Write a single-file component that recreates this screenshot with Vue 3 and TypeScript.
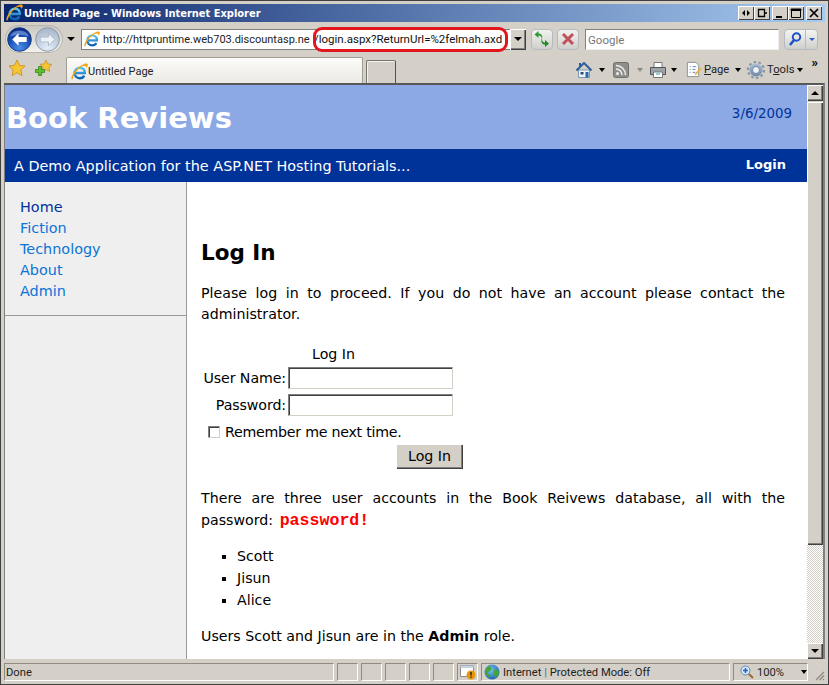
<script setup lang="ts">
const navItems: { label: string; active: boolean }[] = [
  { label: 'Home', active: true },
  { label: 'Fiction', active: false },
  { label: 'Technology', active: false },
  { label: 'About', active: false },
  { label: 'Admin', active: false },
]
const users: string[] = ['Scott', 'Jisun', 'Alice']
</script>

<template>
  <div class="win">
    <svg width="0" height="0" class="defs">
      <defs>
        <linearGradient id="eg" x1="0" y1="0" x2="0" y2="1">
          <stop offset="0" stop-color="#58c8f4" />
          <stop offset="1" stop-color="#0a62b8" />
        </linearGradient>
        <radialGradient id="backg" cx="0.5" cy="0.85" r="0.8">
          <stop offset="0" stop-color="#4a8ee8" />
          <stop offset="0.6" stop-color="#1a50b8" />
          <stop offset="1" stop-color="#0c2a80" />
        </radialGradient>
        <radialGradient id="fwdg" cx="0.5" cy="0.85" r="0.8">
          <stop offset="0" stop-color="#e4edf6" />
          <stop offset="1" stop-color="#a8b8cc" />
        </radialGradient>
        <radialGradient id="globeg" cx="0.4" cy="0.35" r="0.7">
          <stop offset="0" stop-color="#7cc4f0" />
          <stop offset="1" stop-color="#1a5fb0" />
        </radialGradient>
        <linearGradient id="gearg" x1="0" y1="0" x2="0" y2="1">
          <stop offset="0" stop-color="#a9bed4" />
          <stop offset="1" stop-color="#6f89a6" />
        </linearGradient>
        <symbol id="ie" viewBox="0 0 16 16">
          <path d="M3.600 9.400h9.400c.2-3-1.800-5-4.600-5-2.900 0-5 2.200-5 5.100 0 2.800 2 4.800 4.800 4.800 1.900 0 3.400-.8 4.200-2.400" fill="none" stroke="url(#eg)" stroke-width="2.300" />
          <path d="M.6 15.400C-.6 13 4 5 10.500 1.800c2.600-1.300 4.700-1.700 5.200-.6.400.9-.3 2.300-1.400 3.600.2-1.100-.2-2.100-1.200-2.300C9.500 2 3.300 8.500 1.900 14c-.2.800-.8 1.900-1.300 1.400z" fill="#f2a416" />
        </symbol>
      </defs>
    </svg>

    <div class="titlebar">
      <svg class="title-ie" width="17" height="17"><use href="#ie" /></svg>
      <span class="title-text">Untitled Page - Windows Internet Explorer</span>
      <div class="capbtns">
        <span class="capbtn"><svg width="12" height="10" viewBox="0 0 12 10"><path d="M5 2v6L2 5zM7 2v6l3-3z" fill="#000" /></svg></span>
        <span class="capbtn gap"><svg width="12" height="10" viewBox="0 0 12 10"><path d="M2.500 1.500h6v7h-6zM8 5h3" fill="none" stroke="#000" stroke-width="1.300" /></svg></span>
        <span class="capbtn"><svg width="12" height="10" viewBox="0 0 12 10"><path d="M2 8h6v2H2z" fill="#000" /></svg></span>
        <span class="capbtn"><svg width="12" height="10" viewBox="0 0 12 10"><path d="M1.500 1.500h9v8h-9zM1 1h10v1.500H1z" fill="none" stroke="#000" /></svg></span>
        <span class="capbtn close"><svg width="12" height="10" viewBox="0 0 12 10"><path d="M2 1l8 8M10 1l-8 8" stroke="#000" stroke-width="1.700" /></svg></span>
      </div>
    </div>

    <div class="addr-row">
      <div class="navpod">
        <svg width="25" height="25" viewBox="0 0 26 26" class="navbtn">
          <circle cx="13" cy="13" r="12.300" fill="url(#backg)" stroke="#173a88" />
          <path d="M3 10a10.500 9 0 0 1 20 0a18 10 0 0 0-20 0z" fill="#8fb8ee" opacity=".55" />
          <path d="M5.500 13l6.500-6.500v4h8.500v5H12v4z" fill="#fff" />
        </svg>
        <svg width="25" height="25" viewBox="0 0 26 26" class="navbtn">
          <circle cx="13" cy="13" r="12.300" fill="url(#fwdg)" stroke="#8a97a8" />
          <path d="M20.500 13L14 6.500v4H5.500v5H14v4z" fill="#eef2f6" stroke="#9fb0c4" stroke-width=".8" />
        </svg>
      </div>
      <span class="tri nav-tri"></span>
      <div class="addr-box">
        <span class="doc"><svg width="16" height="16"><use href="#ie" /></svg></span>
        <span class="url">http://httpruntime.web703.discountasp.ne</span>
        <span class="url-rest">/login.aspx?ReturnUrl=%2felmah.axd</span>
        <span class="redmark"></span>
        <span class="addr-drop"><span class="tri"></span></span>
      </div>
      <span class="tbtn first">
        <svg width="18" height="18" viewBox="0 0 18 18"><path d="M9 9C8.500 6.500 7 5.500 5.500 5.500V8L1.500 4.500 5.500 1v2.500C8.500 3.500 10 6 9 9z" fill="#2e9a34" /><path d="M9 8c-.5 2.700.8 4.500 3 4.800V10l4 3.500-4 3.500v-2.300C8.500 14.700 7.600 11 9 8z" fill="#1f8a2a" /></svg>
      </span>
      <span class="tbtn">
        <svg width="16" height="16" viewBox="0 0 16 16"><path d="M3 3l10 10M13 3L3 13" stroke="#c2505a" stroke-width="3" /></svg>
      </span>
      <div class="search-box">Google</div>
      <div class="search-btn">
        <span class="s-main">
          <svg width="16" height="16" viewBox="0 0 16 16"><circle cx="9.500" cy="6" r="3.700" fill="none" stroke="#1a50c8" stroke-width="2" /><path d="M7 9l-4 5" stroke="#1a50c8" stroke-width="2.500" /></svg>
        </span>
        <span class="s-drop"><span class="tri blue"></span></span>
      </div>
    </div>

    <div class="tab-row">
      <svg class="star" width="18" height="18" viewBox="0 0 18 18"><path d="M9 1l2.400 5.300 5.600.7-4.100 3.900 1.100 5.700L9 13.800 4 16.600l1.100-5.700L1 7l5.600-.7z" fill="#f6c535" stroke="#c88a18" stroke-width=".8" /></svg>
      <svg class="star2" width="18" height="18" viewBox="0 0 18 18"><path d="M11 1l1.700 3.900 4.300.5-3.100 2.900.8 4.200L11 10.500 7.300 12.500l.8-4.200L5 5.400l4.300-.5z" fill="#f6c535" stroke="#c88a18" stroke-width=".7" /><path d="M3.500 7.500h3v3h3v3h-3v3h-3v-3h-3v-3h3z" fill="#5cc02c" stroke="#2a7a18" stroke-width=".7" /></svg>
      <div class="tab">
        <svg width="17" height="17"><use href="#ie" /></svg>
        <span>Untitled Page</span>
      </div>
      <div class="newtab"></div>
      <div class="cmdbar">
        <svg width="16" height="16" viewBox="0 0 16 16"><path d="M2.500 8v7.500h11V8z" fill="#eef3f8" stroke="#7b98b8" /><path d="M.5 8.500L8 1l7.500 7.500" fill="none" stroke="#2c5f9e" stroke-width="2" /><path d="M3 1h2v3H3z" fill="#2c5f9e" /><path d="M9.500 10h3v5.500h-3z" fill="#2c66a8" /><path d="M4.500 10h3v2.500h-3z" fill="#2c4a78" /></svg>
        <span class="tri c1"></span>
        <svg class="rss" width="16" height="16" viewBox="0 0 16 16"><rect x=".5" y=".5" width="15" height="15" rx="2" fill="#8e8e8a" stroke="#6e6e6a" /><circle cx="4.500" cy="11.500" r="1.500" fill="#eee" /><path d="M3 7a6 6 0 0 1 6 6M3 3.500a9.500 9.500 0 0 1 9.500 9.500" fill="none" stroke="#eee" stroke-width="1.500" /></svg>
        <span class="tri c2 dim"></span>
        <svg class="print" width="18" height="18" viewBox="0 0 18 18"><path d="M5 1.500h8v5H5z" fill="#fff" stroke="#777" /><path d="M1.500 6.500h15v7h-15z" fill="#9ea4aa" stroke="#50555b" /><path d="M4.500 11h9v5.500h-9z" fill="#fff" stroke="#777" /><path d="M7 13h4" stroke="#2aa0a0" /></svg>
        <span class="tri c3"></span>
        <svg class="pg" width="17" height="17" viewBox="0 0 18 18"><path d="M2.500 1.500h9l3 3v12h-12z" fill="#fff" stroke="#8a8f96" /><path d="M5 6h1M8 6h4M5 9h1M8 9h3M5 12h1M8 12h3" stroke="#5a80b8" /><path d="M10 14l6-7 1.500 1.500-6 6.500z" fill="#e8b040" /></svg>
        <span class="cmd-label"><u>P</u>age</span>
        <span class="tri c4"></span>
        <svg class="gear" width="18" height="18" viewBox="0 0 18 18"><circle cx="9" cy="9" r="6.500" fill="url(#gearg)" /><circle cx="9" cy="9" r="8" fill="none" stroke="#7d92a8" stroke-width="2" stroke-dasharray="2.500 2.500" /><circle cx="9" cy="9" r="3.500" fill="#eef2f6" stroke="#6f89a6" /></svg>
        <span class="cmd-label">T<u>o</u>ols</span>
        <span class="tri c5"></span>
        <span class="more">»</span>
      </div>
    </div>

    <div class="viewport">
      <div class="page">
        <header class="hero">
          <h1>Book Reviews</h1>
          <span class="date">3/6/2009</span>
        </header>
        <div class="band">
          <span>A Demo Application for the ASP.NET Hosting Tutorials...</span>
          <a class="login">Login</a>
        </div>
        <div class="columns">
          <aside class="side">
            <ul class="nav">
              <li v-for="item in navItems" :key="item.label" :class="{ active: item.active }">{{ item.label }}</li>
            </ul>
          </aside>
          <main class="main">
            <h2>Log In</h2>
            <p class="just">Please log in to proceed. If you do not have an account please contact the administrator.</p>
            <div class="form">
              <div class="form-title">Log In</div>
              <div class="frow"><label>User Name:</label><span class="inp"></span></div>
              <div class="frow"><label>Password:</label><span class="inp"></span></div>
              <div class="rem"><span class="chk"></span>Remember me next time.</div>
              <div class="submit"><span class="btn">Log In</span></div>
            </div>
            <p class="just p2">There are three user accounts in the Book Reivews database, all with the password: <code>password!</code></p>
            <ul class="users">
              <li v-for="u in users" :key="u">{{ u }}</li>
            </ul>
            <p class="last">Users Scott and Jisun are in the <b>Admin</b> role.</p>
          </main>
        </div>
      </div>
      <div class="vscroll">
        <span class="sbtn"><span class="tri up"></span></span>
        <span class="thumb"></span>
        <span class="track"></span>
        <span class="sbtn"><span class="tri"></span></span>
      </div>
    </div>

    <div class="status">
      <div class="cell done">Done</div>
      <div class="cell s"></div>
      <div class="cell s"></div>
      <div class="cell s"></div>
      <div class="cell s"></div>
      <div class="cell s"></div>
      <div class="cell warn">
        <svg width="18" height="16" viewBox="0 0 18 16"><path d="M1.500 1.500h13v11h-13z" fill="#fff" stroke="#8a8a8a" /><path d="M1.500 1.500h13v2.500h-13z" fill="#c7d4e4" /><circle cx="12" cy="11" r="4.500" fill="#e8950c" /><path d="M12 8v3.500M12 12.500v1.200" stroke="#222" stroke-width="1.400" /></svg>
      </div>
      <div class="cell zone">
        <svg width="16" height="16" viewBox="0 0 16 16"><circle cx="8" cy="8" r="7.500" fill="url(#globeg)" /><path d="M5 2c2 1 3 2 2 4s-3 1-3 3 2 2 3 4c-3 0-6-2-6-5s2-5 4-6zM10 6c2-1 4 0 5 2 0 3-2 5-4 6 0-2-1-3-1-4s-1-3 0-4z" fill="#3ea83a" /></svg>
        <span>Internet <i class="bar">|</i> Protected Mode: Off</span>
      </div>
      <div class="cell zoom">
        <svg width="14" height="14" viewBox="0 0 14 14"><circle cx="5.500" cy="5.500" r="4.500" fill="#dcebfa" stroke="#5b86b8" /><path d="M3 5.500h5M5.500 3v5" stroke="#2060c0" stroke-width="1.600" /><path d="M9 9l4 4" stroke="#9a6a2a" stroke-width="2" /></svg>
        <span class="zoomt">100%</span>
        <span class="tri z"></span>
      </div>
      <svg class="grip" width="12" height="12" viewBox="0 0 12 12"><path d="M11 3l-8 8M11 6.500L6.500 11M11 10l-1 1" stroke="#8f8b83" stroke-width="1.300" /></svg>
    </div>
  </div>
</template>

<style>
html, body { margin: 0; padding: 0; overflow: hidden; }
</style>

<style scoped>
* { box-sizing: border-box; }
.defs { position: absolute; }
.win {
  width: 829px; height: 685px; overflow: hidden;
  background: #d4d0c8;
  border: 4px solid #d4d0c8; border-top-width: 3px;
  display: flex; flex-direction: column;
  font-family: Roboto, "Noto Sans", sans-serif;
  color: #000;
  outline: 1px solid #404040; outline-offset: -1px;
}
.tri { display: inline-block; width: 0; height: 0; flex: none; border-left: 4px solid transparent; border-right: 4px solid transparent; border-top: 4px solid #000; }
.tri.up { border-top: 0; border-bottom: 4px solid #000; }
.tri.blue { border-top-color: #2a60c8; border-left-width: 3px; border-right-width: 3px; border-top-width: 3px; }
.tri.dim { border-top-color: #8a8a8a; }

.titlebar {
  height: 18px; flex: none; display: flex; align-items: center;
  background: linear-gradient(90deg, #0a246a 0%, #a6caf0 100%);
  margin-top: 1px; padding-left: 2px;
}
.title-ie { margin-right: 1px; margin-top: -1px; flex: none; }
.title-text { color: #fff; font: bold 11px "DejaVu Sans Condensed", "DejaVu Sans", sans-serif; white-space: nowrap; }
.capbtns { margin-left: auto; display: flex; padding-right: 3px; }
.capbtn {
  width: 16px; height: 14px; display: flex; align-items: center; justify-content: center;
  background: #d4d0c8; box-shadow: inset 1px 1px 0 #fff, inset -1px -1px 0 #404040;
}
.capbtn.gap { margin-right: 2px; }
.capbtn.close { margin-left: 2px; }

.addr-row { height: 34px; flex: none; display: flex; align-items: center; }
.navpod { display: flex; gap: 3px; padding: 0 0 0 2px; margin-left: 1px; border-radius: 15px; background: linear-gradient(#c8c6c0, #f4f3f0); box-shadow: inset 0 0 0 1px #b8b5ad; height: 28px; align-items: center; width: 58px; flex: none; }
.navbtn { display: block; flex: none; }
.nav-tri { margin-left: 4px; margin-right: 6px; }
.addr-box {
  position: relative; width: 429px; flex: none; height: 21px; display: flex; align-items: center;
  background: #fff; border: 1px solid #808080; border-right: 0; font-size: 11.5px;
}
.doc { width: 18px; height: 19px; margin-left: 1px; margin-right: 2px; flex: none; display: flex; align-items: center; justify-content: center; }
.url { color: #222; white-space: nowrap; width: 211px; flex: none; font-size: 11px; }
.url-rest { white-space: nowrap; color: #111; }
.redmark {
  position: absolute; left: 231px; top: -3px; width: 195px; height: 25px;
  border: 3px solid #e1161f; border-radius: 9px;
}
.addr-drop {
  position: absolute; right: -16px; top: -1px; width: 16px; height: 21px; background: #d4d0c8;
  display: flex; align-items: center; justify-content: center;
  box-shadow: inset 1px 1px 0 #fff, inset -1px -1px 0 #404040, inset -2px -2px 0 #808080;
}
.tbtn {
  width: 22px; height: 21px; border: 1px solid #b5bac2; border-radius: 4px;
  background: linear-gradient(#f2f2ee, #cfcfcb);
  display: flex; align-items: center; justify-content: center; margin-left: 4px; flex: none;
}
.tbtn.first { margin-left: 21px; }
.search-box {
  margin-left: 6px; width: 194px; height: 21px; background: #fff; border: 1px solid #808080; border-right-color: #eee; border-bottom-color: #eee;
  font-size: 11.5px; color: #777; line-height: 20px; padding-left: 2px; flex: none;
}
.search-btn { margin-left: 5px; display: flex; height: 21px; width: 34px; flex: none; border: 1px solid #b5bac2; border-radius: 4px; background: linear-gradient(#f4f4f0, #cfd0cc); }
.s-main { width: 21px; display: flex; align-items: center; justify-content: center; border-right: 1px solid #b5bac2; }
.s-drop { flex: 1; display: flex; align-items: center; justify-content: center; }

.tab-row { height: 27px; flex: none; display: flex; align-items: flex-end; position: relative; }
.star { margin-left: 4px; margin-bottom: 6px; flex: none; }
.star2 { margin-left: 9px; margin-bottom: 6px; flex: none; }
.tab {
  margin-left: 13px; width: 297px; height: 26px; display: flex; align-items: center; gap: 0; flex: none;
  background: linear-gradient(#fbfbf9, #eceae4); border: 1px solid #9f9d96; border-bottom: 0; border-radius: 2px 2px 0 0;
  font-size: 11px; padding: 2px 0 0 4px; color: #222;
}
.newtab { margin-left: 3px; width: 30px; height: 23px; background: #d4d0c8; border: 1px solid #77746e; border-bottom: 0; border-right-color: #55524e; box-shadow: inset 1px 1px 0 #f3f1ec; border-radius: 2px 2px 0 0; flex: none; }
.cmdbar { margin-left: 180px; height: 27px; display: flex; align-items: center; font-size: 11.2px; position: relative; flex: none; width: 248px; }
.cmd-label { color: #222; margin-left: 2px; width: 26px; white-space: nowrap; }
.c1, .c2, .c3, .c4, .c5 { border-left-width: 3px; border-right-width: 3px; }
.c1 { margin-left: 7px; margin-right: 8px; }
.c2 { margin-left: 8px; margin-right: 6px; }
.c3 { margin-left: 4px; margin-right: 8px; }
.c4 { margin-left: 5px; margin-right: 6px; }
.c5 { margin-left: 4px; }
.more { position: absolute; right: 6px; top: 0; font-size: 13px; font-weight: bold; line-height: 13px; }

.viewport { flex: 1; min-height: 0; display: flex; border-top: 2px solid #585858; border-right: 2px solid #808080; background: #fff; overflow: hidden; }
.page { flex: 1; min-width: 0; display: flex; flex-direction: column; font-family: "DejaVu Sans", Verdana, sans-serif; font-size: 14.2px; overflow: hidden; border-left: 1px solid #808080; }
.hero { height: 64px; flex: none; background: #8ca9e6; display: flex; align-items: center; justify-content: space-between; padding: 0 15px 0 1px; }
h1 { margin: 0; padding-top: 2px; color: #fff; font-size: 29px; font-weight: bold; line-height: 64px; }
.date { color: #003399; font-size: 13.4px; margin-top: -8px; }
.band { height: 33px; flex: none; background: #003399; color: #fff; display: flex; align-items: center; justify-content: space-between; padding: 0 21px 0 9px; font-size: 14.4px; }
.login { font-weight: bold; font-size: 13px; margin-top: -2px; }
.columns { flex: 1; min-height: 0; display: flex; }
.side { width: 182px; flex: none; background: #efefef; border-right: 1px solid #999; }
.nav { list-style: none; margin: 0; padding: 15px 0 13px 15px; border-bottom: 1px solid #999; line-height: 21px; color: #0a74d6; font-size: 14.4px; }
.nav .active { color: #003399; }
.main { flex: 1; min-width: 0; padding: 0 22px 0 14px; line-height: 21px; }
h2 { margin: 58px 0 0; font-size: 21.5px; font-weight: bold; line-height: 26px; }
.just { text-align: justify; margin: 17px 0 0; }
.form { margin-top: 19px; width: 262px; }
.form-title { text-align: center; line-height: 20px; height: 21px; padding-left: 3px; }
.frow { display: flex; align-items: center; justify-content: flex-end; height: 27px; padding-right: 10px; }
.frow label { white-space: nowrap; margin-right: 2px; letter-spacing: -.1px; }
.inp { display: block; flex: none; width: 165px; height: 22px; margin-top: -2px; background: #fff; border: 1px solid #d4d0c8; border-top-color: #808080; border-left-color: #808080; box-shadow: inset 1px 1px 0 #404040; }
.rem { display: flex; align-items: center; padding-left: 7px; height: 24px; margin-top: 1px; letter-spacing: -.25px; }
.chk { width: 12px; height: 12px; border: 1px solid #d4d0c8; border-top-color: #808080; border-left-color: #808080; box-shadow: inset 1px 1px 0 #404040; background: #fff; margin-right: 5px; flex: none; }
.submit { display: flex; justify-content: flex-end; }
.btn { width: 67px; height: 25px; background: #d4d0c8; display: flex; align-items: center; justify-content: center; box-shadow: inset 1px 1px 0 #fff, inset -1px -1px 0 #404040, inset -2px -2px 0 #808080; }
.p2 { margin-top: 18px; line-height: 22px; }
code { font: bold 16.6px "Liberation Mono", monospace; color: #f00; margin-left: 2px; }
.users { margin: 14px 0 0; padding: 0 0 0 36px; list-style: square; line-height: 22px; }
.last { margin: 15px 0 0; }

.vscroll { width: 16px; flex: none; display: flex; flex-direction: column; background: #d4d0c8; }
.sbtn { height: 16px; flex: none; display: flex; align-items: center; justify-content: center; background: #d4d0c8; box-shadow: inset 1px 1px 0 #fff, inset -1px -1px 0 #404040, inset -2px -2px 0 #808080; }
.thumb { height: 443px; margin-top: 1px; flex: none; background: #d4d0c8; box-shadow: inset 1px 1px 0 #fff, inset -1px -1px 0 #404040, inset -2px -2px 0 #808080; }
.track { flex: 1; background-image: repeating-conic-gradient(#fff 0 25%, #d4d0c8 0 50%); background-size: 2px 2px; }

.status { height: 18px; flex: none; display: flex; align-items: stretch; font-size: 11.2px; margin-top: 4px; position: relative; gap: 3px; color: #222; }
.cell { border: 1px solid #fff; border-top-color: #8e8b83; border-left-color: #8e8b83; display: flex; align-items: center; height: 18px; flex: none; }
.done { width: 330px; padding-left: 1px; }
.cell.s { width: 21px; }
.warn { width: 21px; justify-content: center; }
.zone { width: 249px; gap: 3px; padding-left: 2px; }
.bar { font-style: normal; color: #2c6cb0; }
.zoom { width: 75px; gap: 3px; padding-left: 6px; }
.zoomt { margin-right: 14px; }
.z { border-left-width: 3px; border-right-width: 3px; }
.grip { position: absolute; right: 0; bottom: 0; }
</style>
